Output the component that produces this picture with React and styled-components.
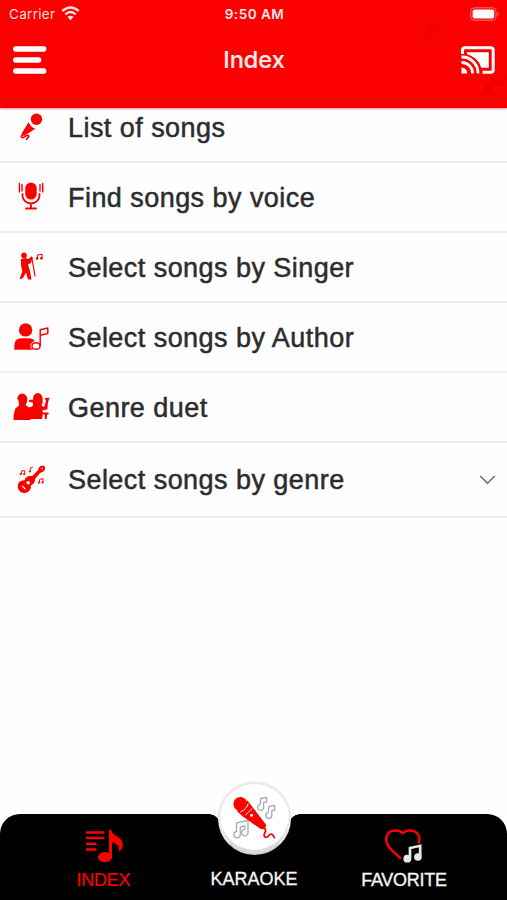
import styled, { createGlobalStyle } from "styled-components";

const GlobalStyle = createGlobalStyle`
    * {
        box-sizing: border-box;
    }
    body {
        margin: 0;
        background-color: #fff;
        font-family: "Liberation Sans", Arial, sans-serif;
    }
`;

const Screen = styled.div`
    display: flex;
    flex-direction: column;
    height: 900px;
    overflow: hidden;
    background-color: #fefefe;
`;

const Header = styled.header`
    position: relative;
    z-index: 1;
    flex: none;
    height: 108px;
    background-color: #fb0000;
    color: #fff;
    font-family: Inter, "Liberation Sans", sans-serif;
    box-shadow: 0 1px 2px rgba(120, 0, 0, 0.4);
`;

const StatusBar = styled.div`
    display: grid;
    grid-template-columns: 1fr auto 1fr;
    align-items: center;
    height: 27px;
    padding: 0 7px 0 9px;
    font-size: 13px;
`;

const Carrier = styled.div`
    display: flex;
    align-items: center;
    gap: 6px;
    font-size: 13.5px;
    letter-spacing: 0.3px;
    color: #ffdede;
`;

const Time = styled.span`
    font-size: 13.5px;
    font-weight: 600;
    letter-spacing: 0.5px;
    color: #ffe8e8;
`;

const Battery = styled.svg`
    justify-self: end;
`;

const NavBar = styled.div`
    display: grid;
    grid-template-columns: 1fr auto 1fr;
    align-items: center;
    height: 65px;
    padding: 0 12px 0 13px;
`;

const Title = styled.h1`
    margin: 0;
    font-size: 23.5px;
    font-weight: 500;
    color: #ffeaea;
    -webkit-text-stroke: 0.2px currentColor;
`;

const CastIcon = styled.svg`
    justify-self: end;
`;

const HeaderNotes = styled.svg`
    position: absolute;
    right: 0;
    top: 18px;
    color: #d80000;
`;

// the list is scrolled a little, its first row starts behind the header
const List = styled.ul`
    flex: 1;
    margin: -15px 0 0;
    padding: 0;
    list-style: none;
`;

const Row = styled.li`
    display: flex;
    align-items: center;
    gap: 17px;
    height: ${(props) => (props.$tall ? 75 : 70)}px;
    padding: 0 11px;
    border-bottom: 2px solid #ededed;
    color: #2c2c2e;
`;

const RowIcon = styled.svg`
    flex: none;
    color: #fb0000;
`;

const RowLabel = styled.span`
    flex: 1;
    font-size: 27px;
    line-height: 30px;
    letter-spacing: 0.45px;
    padding-top: ${(props) => (props.$tall ? 0 : 2)}px;
    white-space: nowrap;
    -webkit-text-stroke: 0.5px currentColor;
`;

const TabBar = styled.nav`
    position: relative;
    flex: none;
    display: grid;
    grid-template-columns: 207px 94px 206px;
    height: 86px;
    background-color: #000;
    border-radius: 20px 20px 0 0;
`;

const Tab = styled.div`
    display: flex;
    flex-direction: column;
    align-items: center;
    justify-content: flex-end;
    gap: 7px;
    padding-bottom: ${(props) => (props.$raised ? 11 : 10)}px;
    color: ${(props) => (props.$active ? "#fb0000" : "#f5f5f5")};
    font-size: 18px;
    line-height: 20px;
    letter-spacing: ${(props) => (props.$raised ? 0 : -0.25)}px;
    white-space: nowrap;
    -webkit-text-stroke: ${(props) => (props.$active ? 0.2 : 0.35)}px currentColor;
`;

// white curve where the bar bends around the round button
const Notch = styled.div`
    position: absolute;
    top: 0;
    left: 209px;
    width: 91px;
    height: 11px;
    background:
        radial-gradient(circle at 0 11px, #000 10.5px, #fefefe 11px) left / 11px 11px no-repeat,
        radial-gradient(circle at 100% 11px, #000 10.5px, #fefefe 11px) right / 11px 11px no-repeat;
`;

const KaraokeButton = styled.div`
    position: absolute;
    top: -32px;
    left: 218px;
    width: 73px;
    height: 73px;
    border: 2px solid #eaeaea;
    border-bottom-color: #cfcfcf;
    border-radius: 50%;
    background-color: #fff;
    box-shadow: inset 0 -3px 1px #d9d9d9, 0 0 2px rgba(0, 0, 0, 0.15);
`;

const line = {
    fill: "none",
    stroke: "currentColor",
    strokeLinecap: "round",
    strokeLinejoin: "round",
};

function MicIcon() {
    return (
        <>
            <circle cx="25.5" cy="12.3" r="5.7" fill="currentColor" />
            <path d="M17.7 15 Q19.3 20 24.3 21.7 L13 29 L10.6 26.5Z" fill="currentColor" />
            <path d="M12 27.5 C8.5 30 11 31.6 13.5 29.8 C16 28 18.8 27.8 17.5 30 L15.5 32.3" {...line} strokeWidth="1.6" />
        </>
    );
}

function VoiceIcon() {
    return (
        <>
            <rect x="14.3" y="5.6" width="11.4" height="17" rx="5.7" fill="currentColor" />
            <path d="M11.5 17 v1.5 a8.5 8 0 0 0 17 0 V17 M20 26.5 V31.5 M15 31.5 H25" {...line} strokeWidth="1.8" />
            <path d="M8.4 6.5 V15 M11 7.5 V14 M29 7.5 V14 M31.7 6.5 V15" {...line} strokeWidth="1.4" />
        </>
    );
}

function SingerIcon() {
    return (
        <>
            <circle cx="13" cy="8.4" r="2.8" fill="currentColor" />
            <path
                d="M9.8 12 L15 11 L17.5 12.3 L20 9.5 L21.8 10.7 L19.9 16 L17 17.4 L19 24 L20.5 32.4 H17 L15 25.5 L12.3 30.5 L9.5 32.6 L8.8 31.3 L11.3 24.5 L10 18Z"
                fill="currentColor"
            />
            <path d="M20.7 10 L24 29" {...line} strokeWidth="1.2" />
            <path d="M26.5 11.5 V8 L31 7.2 V11" {...line} strokeWidth="1.1" />
            <circle cx="26" cy="11.6" r="1.3" fill="currentColor" />
            <circle cx="30.4" cy="11.2" r="1.3" fill="currentColor" />
        </>
    );
}

function AuthorIcon() {
    return (
        <>
            <circle cx="14.6" cy="12.9" r="6.7" fill="currentColor" />
            <path d="M3.3 32.8 V28.5 Q3.5 21.2 10.5 21.2 H18 Q22 21.2 23.5 24 Q19.5 26 19.3 29 Q19.5 31.5 22 32.8Z" fill="currentColor" />
            <ellipse cx="25" cy="29" rx="4.1" ry="3.3" {...line} strokeWidth="1.5" />
            <path d="M29.2 28.8 V12.7 L36.8 11 V16.5 L29.3 18.3" {...line} strokeWidth="1.5" />
        </>
    );
}

function DuetIcon() {
    return (
        <>
            <path
                d="M6.2 11.8 Q7 7 11 6.5 Q15.6 7 16.3 11.5 L15.8 15.5 L14.6 18.2 L18.5 20.5 L20.8 19.5 L22 18.5 L22 15.7 L18 14.7 L18.2 12.7 L22 12.7 L22.5 9 Q24 6 27.2 6 Q30.5 6.6 31.6 10.5 V16 L30.3 18.4 L33.3 20 L35 13.5 L33.5 11 L38.6 10.8 L37 15.3 L36.3 22.5 L31.5 23.3 L31.8 25.5 H37.6 V27.4 H36.2 L35.6 32.2 H33.8 V27.6 H31.8 L31 32 H19.5 V33 H2.6 V28.5 L4.2 21.8 L8.2 18.3 L7.3 13Z"
                fill="currentColor"
            />
        </>
    );
}

function GuitarIcon() {
    return (
        <>
            <path
                d="M7.8 22.5 Q10 20 13.8 20.2 Q14.3 16.5 18.5 16 L21.2 16 L27 10.3 L28 7.2 Q31.5 4.2 33.7 6.6 Q35.2 9.5 31.7 12 L29.3 12.8 L24 19 Q24.3 23.5 19.8 25.5 Q20.5 29 17.5 31.4 Q14 34 9.8 32.2 Q4.8 28 7.8 22.5Z"
                fill="currentColor"
            />
            <circle cx="17.2" cy="22.8" r="1.8" fill="#fff" />
            <path d="M11.3 26 L14.5 29.2" stroke="#fff" strokeWidth="1.2" />
            <circle cx="31" cy="8.5" r="0.8" fill="#fff" />
            <g {...line} strokeWidth="1">
                <path d="M10.3 14 L10.8 10.8 H14 L13.6 14.2" />
                <path d="M19.3 11.5 V8 L21.5 7.3" />
                <path d="M28.2 22.8 L28.6 19.3 L32 18.8 V22.5" />
            </g>
            <g fill="currentColor">
                <circle cx="9.7" cy="14" r="1" />
                <circle cx="13" cy="14.3" r="1" />
                <circle cx="18.7" cy="11.5" r="1" />
                <circle cx="27.7" cy="22.8" r="1" />
                <circle cx="31.4" cy="22.5" r="1" />
            </g>
        </>
    );
}

const items = [
    { label: "List of songs", Icon: MicIcon },
    { label: "Find songs by voice", Icon: VoiceIcon },
    { label: "Select songs by Singer", Icon: SingerIcon },
    { label: "Select songs by Author", Icon: AuthorIcon },
    { label: "Genre duet", Icon: DuetIcon },
    { label: "Select songs by genre", Icon: GuitarIcon, expandable: true },
];

function TopBar() {
    return (
        <Header>
            <HeaderNotes width="90" height="85" viewBox="0 0 90 85">
                <g opacity="0.3">
                    <path d="M9 20 L12 7 L20 11 M12 9 L20 16" {...line} strokeWidth="2" />
                    <circle cx="8" cy="21" r="3" fill="currentColor" />
                </g>
                <g opacity="0.6">
                    <path d="M72 70 L76 61 L84 67 L89 58" {...line} strokeWidth="2" />
                    <circle cx="71" cy="70" r="3" fill="currentColor" />
                </g>
            </HeaderNotes>
            <StatusBar>
                <Carrier>
                    Carrier
                    <svg width="19" height="15" viewBox="0 0 19 15">
                        <path d="M1.2 5 Q9.5 -2 17.8 5" {...line} strokeWidth="2.5" strokeLinecap="butt" />
                        <path d="M4.3 8.3 Q9.5 3.8 14.7 8.3" {...line} strokeWidth="2.3" strokeLinecap="butt" />
                        <path d="M9.5 14.2 L6.4 11 Q9.5 8.4 12.6 11Z" fill="currentColor" />
                    </svg>
                </Carrier>
                <Time>9:50 AM</Time>
                <Battery width="30" height="14" viewBox="0 0 30 14">
                    <rect x="0.8" y="0.8" width="25.2" height="12.4" rx="3.5" fill="none" stroke="#ff7070" strokeWidth="1" />
                    <rect x="2.6" y="2.6" width="21.6" height="8.8" rx="2" fill="#fff" />
                    <path d="M27.4 5 Q30 7 27.4 9Z" fill="#ff7070" />
                </Battery>
            </StatusBar>
            <NavBar>
                <svg width="34" height="28" viewBox="0 0 34 28">
                    <path d="M2.7 3 H30.7 M2.7 14 H25.7 M2.7 25 H30.7" {...line} stroke="#fff" strokeWidth="5.3" />
                </svg>
                <Title>Index</Title>
                <CastIcon width="34" height="28" viewBox="0 0 34 28">
                    <path d="M1.5 8 V4 Q1.5 1.7 4 1.7 H29.8 Q32.2 1.7 32.2 4 V23.8 Q32.2 26.2 29.8 26.2 H21.5" fill="none" stroke="#fff" strokeWidth="3" />
                    <path d="M6 6.2 H27.8 V21.8 H20.3 Q17.5 11.5 6 8.3Z" fill="#fff" />
                    <g fill="none" stroke="#fff" strokeWidth="2.8">
                        <path d="M0.5 11 A16 16 0 0 1 17 27.4" />
                        <path d="M0.5 16.5 A10.7 10.7 0 0 1 11.5 27.4" />
                    </g>
                    <path d="M0.5 21.5 Q6 22 6.3 27.4 H0.5Z" fill="#fff" />
                </CastIcon>
            </NavBar>
        </Header>
    );
}

function BottomTabs() {
    return (
        <TabBar>
            <Notch />
            <Tab $active>
                <svg width="40" height="35" viewBox="0 0 40 35">
                    <path d="M2 4.5 H20.5 M2 10 H20.5 M2 15.7 H12.5 M2 21.5 H12.5" {...line} strokeWidth="2.6" strokeLinecap="butt" />
                    <ellipse cx="21" cy="29.2" rx="7" ry="5.1" fill="currentColor" />
                    <path d="M25 29 V1.8 L27.2 1.8 Q28 5.8 33 8.3 Q39.5 12 38.7 17.8 Q38 22.3 34.8 23.8 Q36 17.3 30.5 15 L28 14.3 V29Z" fill="currentColor" />
                </svg>
                INDEX
            </Tab>
            <Tab $raised>KARAOKE</Tab>
            <Tab>
                <svg width="40" height="35" viewBox="0 0 40 35">
                    <path
                        d="M16.2 30 L7 21.3 Q1 15.3 2.5 8.8 Q4.5 2.5 11 2.5 Q16 2.3 18.8 5.2 Q22.5 1.8 27 2.5 Q33.5 3.3 35 8.8 Q35.9 11.5 34.9 14.5"
                        {...line}
                        stroke="#fb0000"
                        strokeWidth="2.5"
                    />
                    <path d="M26 30 V20 L36.2 17.8 V28" {...line} stroke="#e8e8e8" strokeWidth="2.7" strokeLinejoin="miter" />
                    <circle cx="23.3" cy="30.7" r="3.9" fill="#e8e8e8" />
                    <circle cx="33.9" cy="29" r="3.8" fill="#e8e8e8" />
                </svg>
                FAVORITE
            </Tab>
            <KaraokeButton>
                <svg width="69" height="69" viewBox="220 784 69 69">
                    <g fill="none" stroke="#aaa" strokeWidth="1.3" strokeLinejoin="round">
                        <path d="M236.5 822.8 L248 820.5 V832 A3.2 3.2 0 1 1 244.8 829.4 V826 L240.3 827 V834.8 A3.2 3.2 0 1 1 236.5 831.5Z" />
                        <path d="M260.7 798.5 L266.7 797.3 V802 L263.6 802.4 V807 A3 3 0 1 1 260.3 804.4Z" />
                        <path d="M268.9 806.5 L274.7 805.3 V810 L271.8 810.4 V815 A3 3 0 1 1 268.3 812.4Z" />
                    </g>
                    <circle cx="240.4" cy="804" r="7" fill="#fb0000" />
                    <path d="M247.5 800.5 L252.3 806.7 L266.3 825 L264.8 829.3 L260.7 828.9 L242.5 816.3 L237 811.3Z" fill="#fb0000" />
                    <path d="M248.3 803.5 Q246.8 809 240.3 812" stroke="#fff" strokeWidth="1" fill="none" />
                    <path d="M252.5 808.3 L245.3 815.2" stroke="#fff" strokeWidth="0.9" />
                    <circle cx="251.5" cy="815.3" r="1.5" fill="#fff" />
                    <path d="M264.8 828.5 C268 832 261.5 834.5 265 837 C268 839 269 832.5 272.3 834.5 L274.5 837.5" {...line} stroke="#fb0000" strokeWidth="1.7" />
                </svg>
            </KaraokeButton>
        </TabBar>
    );
}

function App() {
    return (
        <Screen>
            <GlobalStyle />
            <TopBar />
            <List>
                {items.map(({ label, Icon, expandable }) => (
                    <Row key={label} $tall={expandable}>
                        <RowIcon width="40" height="40" viewBox="0 0 40 40">
                            <Icon />
                        </RowIcon>
                        <RowLabel $tall={expandable}>{label}</RowLabel>
                        {expandable && (
                            <svg width="17" height="12" viewBox="0 0 17 12">
                                <path d="M1.2 2 L8.5 9.3 L15.8 2" fill="none" stroke="#777" strokeWidth="1.7" />
                            </svg>
                        )}
                    </Row>
                ))}
            </List>
            <BottomTabs />
        </Screen>
    );
}

export default App;
